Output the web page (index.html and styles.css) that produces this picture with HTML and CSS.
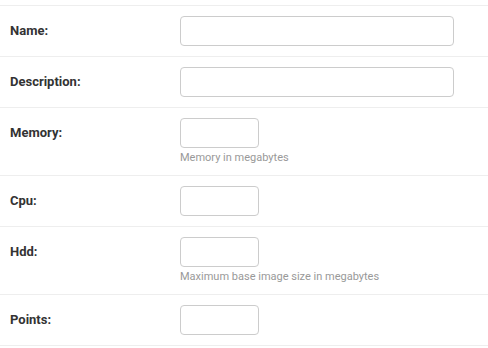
FILE: index.html
```html
<!DOCTYPE html>
<html lang="en">
<head>
  <meta charset="UTF-8" />
  <title>Plan</title>
  <link rel="stylesheet" href="styles.css">
</head>
<body>

  <!-- plan form rows -->
  <form class="plan-form">
    <div class="form-top"></div>

    <div class="form-row">
      <label class="row-label" for="id_name">Name:</label>
      <div class="row-field">
        <input class="text-input wide" type="text" id="id_name">
      </div>
    </div>

    <div class="form-row">
      <label class="row-label" for="id_description">Description:</label>
      <div class="row-field">
        <input class="text-input wide" type="text" id="id_description">
      </div>
    </div>

    <div class="form-row">
      <label class="row-label" for="id_memory">Memory:</label>
      <div class="row-field">
        <input class="text-input small" type="text" id="id_memory">
        <p class="help">Memory in megabytes</p>
      </div>
    </div>

    <div class="form-row">
      <label class="row-label" for="id_cpu">Cpu:</label>
      <div class="row-field">
        <input class="text-input small" type="text" id="id_cpu">
      </div>
    </div>

    <div class="form-row">
      <label class="row-label" for="id_hdd">Hdd:</label>
      <div class="row-field">
        <input class="text-input small" type="text" id="id_hdd">
        <p class="help">Maximum base image size in megabytes</p>
      </div>
    </div>

    <div class="form-row">
      <label class="row-label" for="id_points">Points:</label>
      <div class="row-field">
        <input class="text-input small" type="text" id="id_points">
      </div>
    </div>
  </form>

</body>
</html>
```

FILE: styles.css
```css
* { margin: 0; padding: 0; box-sizing: border-box; }

body {
  background: white;
  color: #333;
  font-family: Roboto, 'Liberation Sans', sans-serif;
  font-size: 13px;
}

.form-top {
  height: 6px;
  border-bottom: 1px solid #eee;
}

.form-row {
  display: flex;
  align-items: flex-start;
  padding: 10px;
  border-bottom: 1px solid #eee;
}

.row-label {
  width: 170px;
  flex-shrink: 0;
  padding-top: 7px;
  font-weight: bold;
  font-size: 13px;
  line-height: 1.3;
  color: #333;
}

.row-field {
  display: flex;
  flex-direction: column;
}

.text-input {
  height: 30px;
  border: 1px solid #ccc;
  border-radius: 4px;
  padding: 5px 6px;
  font-family: inherit;
  font-size: 13px;
  background: white;
}

.wide { width: 274px; }
.small { width: 79px; }

.help {
  margin-top: 2px;
  font-size: 11px;
  line-height: 15px;
  color: #999;
}
```
